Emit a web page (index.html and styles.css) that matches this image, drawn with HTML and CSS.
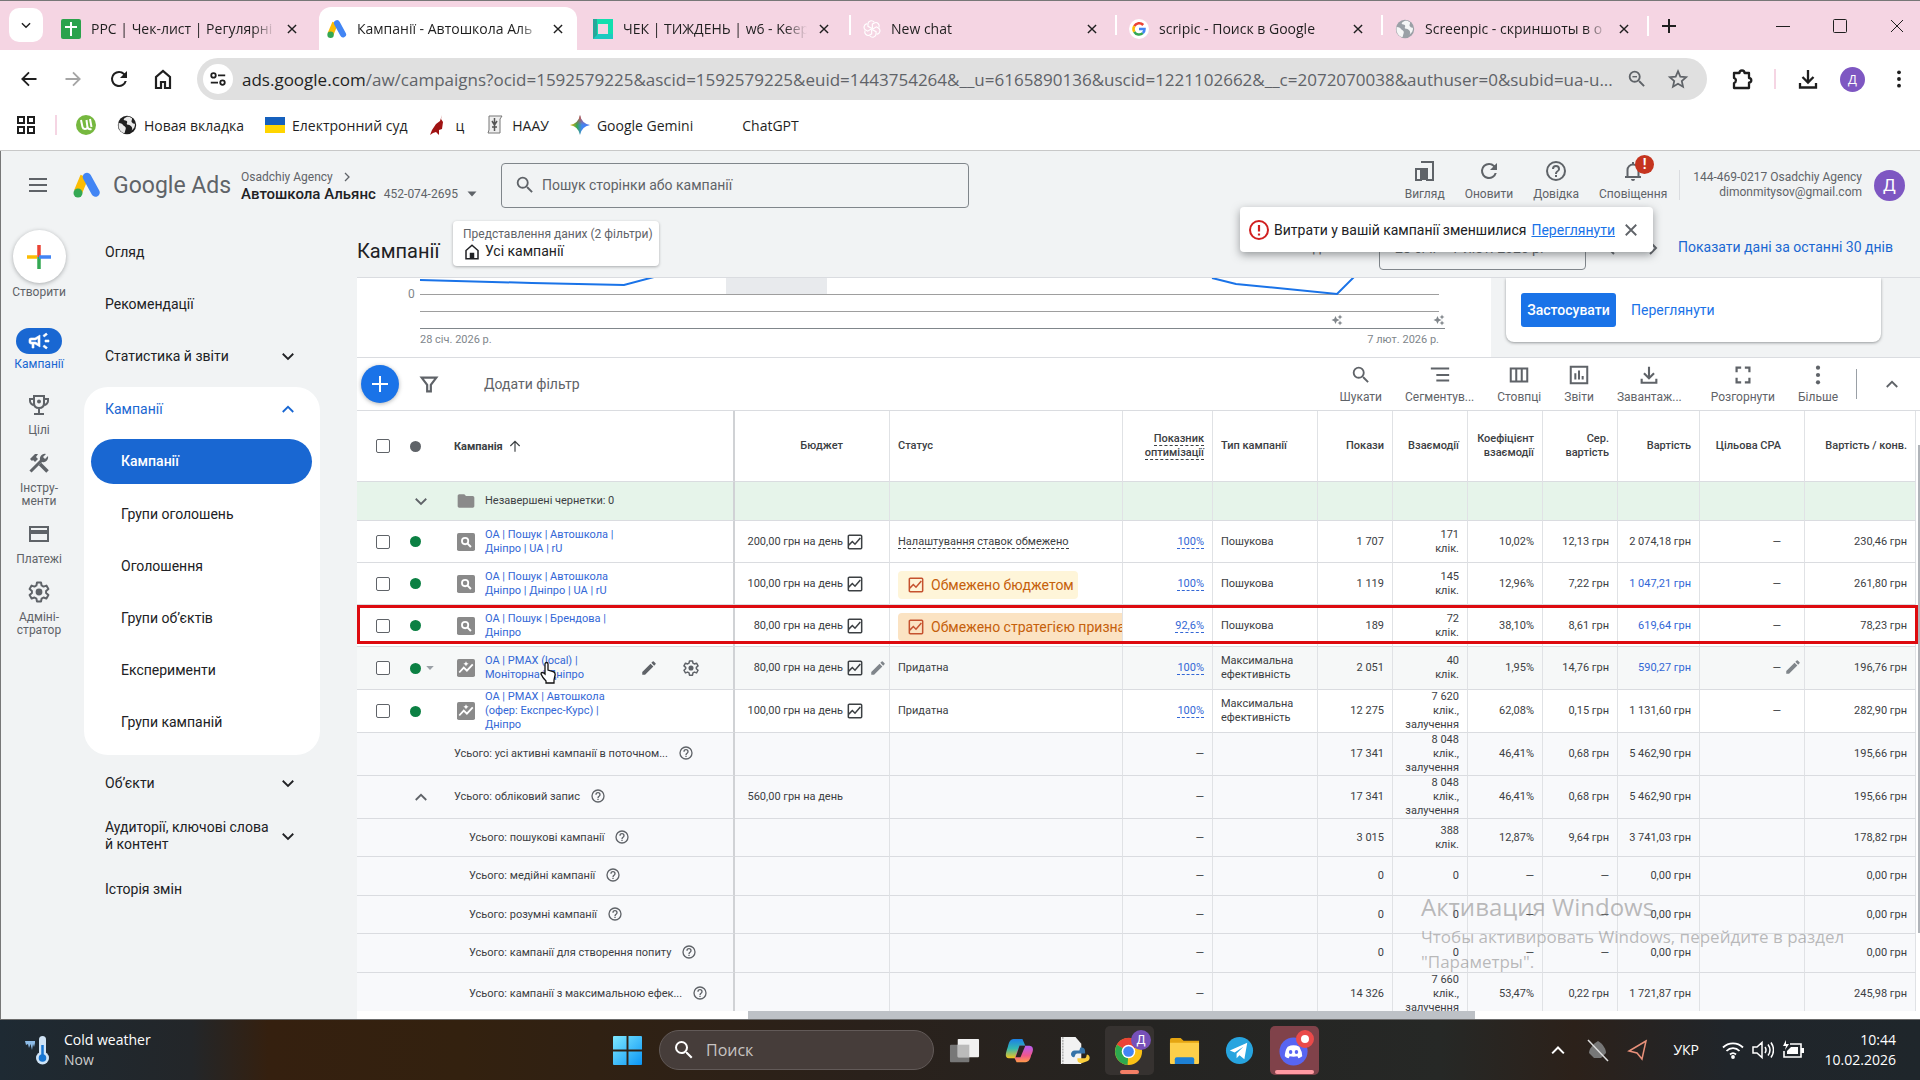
FILE: index.html
```html
<!DOCTYPE html>
<html lang="uk">
<head>
<meta charset="utf-8">
<title>Кампанії - Автошкола Альянс - Google Ads</title>
<link rel="stylesheet" href="styles.css">
</head>
<body>
<svg class="sprite" aria-hidden="true">
  <symbol id="x" viewBox="0 0 24 24"><path d="M5 5l14 14M19 5L5 19" fill="none" stroke="currentColor" stroke-width="2.4"/></symbol>
  <symbol id="down" viewBox="0 0 24 24"><path d="M5 9l7 7 7-7" fill="none" stroke="currentColor" stroke-width="2.4"/></symbol>
  <symbol id="up" viewBox="0 0 24 24"><path d="M5 16l7-7 7 7" fill="none" stroke="currentColor" stroke-width="2.4"/></symbol>
  <symbol id="right" viewBox="0 0 24 24"><path d="M8 4l8 8-8 8" fill="none" stroke="currentColor" stroke-width="2.6"/></symbol>
  <symbol id="left" viewBox="0 0 24 24"><path d="M16 4l-8 8 8 8" fill="none" stroke="currentColor" stroke-width="2.6"/></symbol>
  <symbol id="caret" viewBox="0 0 24 24"><path d="M3 7h18l-9 10z" fill="currentColor"/></symbol>
  <symbol id="back" viewBox="0 0 24 24"><path d="M21 12H4M12 4l-8 8 8 8" fill="none" stroke="currentColor" stroke-width="2.2"/></symbol>
  <symbol id="fwd" viewBox="0 0 24 24"><path d="M3 12h17M12 4l8 8-8 8" fill="none" stroke="currentColor" stroke-width="2.2"/></symbol>
  <symbol id="arrowup" viewBox="0 0 24 24"><path d="M12 22V4M4 12l8-8 8 8" fill="none" stroke="currentColor" stroke-width="2"/></symbol>
  <symbol id="reload" viewBox="0 0 24 24"><path d="M17.65 6.35A7.958 7.958 0 0 0 12 4a8 8 0 1 0 7.73 10h-2.08A6 6 0 1 1 12 6c1.66 0 3.14.69 4.22 1.78L13 11h7V4l-2.35 2.35z" fill="currentColor"/></symbol>
  <symbol id="home" viewBox="0 0 24 24"><path d="M5 21V10l7-6 7 6v11h-5v-6h-4v6z" fill="none" stroke="currentColor" stroke-width="2.2"/></symbol>
  <symbol id="search" viewBox="0 0 24 24"><path d="M15.5 14h-.79l-.28-.27A6.47 6.47 0 0 0 16 9.5 6.5 6.5 0 1 0 9.5 16c1.61 0 3.09-.59 4.23-1.57l.27.28v.79l5 4.99L20.49 19zm-6 0a4.5 4.5 0 1 1 0-9 4.5 4.5 0 0 1 0 9z" fill="currentColor"/></symbol>
  <symbol id="star" viewBox="0 0 24 24"><path d="M12 3.5l2.5 5.9 6.4.6-4.8 4.2 1.4 6.3-5.500-3.300-5.500 3.300 1.400-6.300L3.100 10l6.400-.6z" fill="none" stroke="currentColor" stroke-width="1.9"/></symbol>
  <symbol id="download" viewBox="0 0 24 24"><path d="M12 3v12M6.500 10l5.500 5.500 5.500-5.500M4 16v4.500h16V16" fill="none" stroke="currentColor" stroke-width="2.3"/></symbol>
  <symbol id="dots" viewBox="0 0 24 24"><g fill="currentColor"><circle cx="12" cy="4" r="2.3"/><circle cx="12" cy="12" r="2.3"/><circle cx="12" cy="20" r="2.3"/></g></symbol>
  <symbol id="globe" viewBox="0 0 24 24"><circle cx="12" cy="12" r="11" fill="currentColor"/><path d="M2 9.500c3 .5 5 1 6 3.500 1.500 1 3 1.500 2.500 3.500L9 22C4 20.500 1 16 2 9.500zM12 2c-2 1-4 2-4 4 1 1 3 0 4 1.500 1 2-1 2.500 0 4 2 0 4 1 5.500 2.500 1 1.500 1 3 0 4.500 3-2 4.500-5 4-8-2 .5-3-1-4-2-.5-2 1-3 .5-4.500C16.500 2.500 14.500 2 12 2z" fill="#fff" fill-opacity=".9"/></symbol>
  <symbol id="help" viewBox="0 0 24 24"><path d="M11 18h2v-2h-2v2zm1-16a10 10 0 1 0 0 20 10 10 0 0 0 0-20zm0 18a8 8 0 1 1 0-16 8 8 0 0 1 0 16zm0-14a4 4 0 0 0-4 4h2a2 2 0 1 1 4 0c0 2-3 1.750-3 5h2c0-2.250 3-2.500 3-5a4 4 0 0 0-4-4z" fill="currentColor"/></symbol>
  <symbol id="edit" viewBox="0 0 24 24"><path d="M3 17.250V21h3.750L17.810 9.940l-3.750-3.750zM20.710 7.040a1 1 0 0 0 0-1.410l-2.340-2.340a1 1 0 0 0-1.410 0l-1.830 1.830 3.750 3.750z" fill="currentColor"/></symbol>
  <symbol id="gear" viewBox="0 0 24 24"><path d="M10 2.500h4l.6 3 1.900 1.100 2.900-1 2 3.500-2.300 2v1.900l2.300 2-2 3.500-2.900-1-1.900 1.100-.6 3h-4l-.6-3-1.900-1.100-2.900 1-2-3.500 2.300-2v-1.900l-2.300-2 2-3.500 2.900 1L9.400 5.500z" fill="none" stroke="currentColor" stroke-width="2" stroke-linejoin="round"/><circle cx="12" cy="12" r="3.400" fill="currentColor"/></symbol>
  <symbol id="folder" viewBox="0 0 24 24"><path d="M10 4H4c-1.100 0-2 .9-2 2v12c0 1.100.9 2 2 2h16c1.100 0 2-.9 2-2V8c0-1.100-.9-2-2-2h-8z" fill="currentColor"/></symbol>
  <symbol id="tsearch" viewBox="0 0 20 20"><rect width="20" height="20" rx="2" fill="#8a8a8a"/><circle cx="9" cy="9" r="3.500" fill="none" stroke="#fff" stroke-width="2"/><path d="M11.500 11.500l4 4" stroke="#fff" stroke-width="2.200"/></symbol>
  <symbol id="tpmax" viewBox="0 0 20 20"><rect width="20" height="20" rx="2" fill="#8a8a8a"/><path d="M2.500 15l5-5.500 3.500 3.500L17.500 6" fill="none" stroke="#fff" stroke-width="2"/><path d="M10 2.500l.9 2 2 .9-2 .9-.9 2-.9-2-2-.9 2-.9z" fill="#fff"/></symbol>
  <symbol id="graph" viewBox="0 0 18 18"><rect x="1.500" y="1.500" width="15" height="15" rx="1" fill="none" stroke="currentColor" stroke-width="1.700"/><path d="M2 12.500l4-4 3 3 6-7" fill="none" stroke="currentColor" stroke-width="1.700"/></symbol>
  <symbol id="spark" viewBox="0 0 24 24"><path d="M9 4l2.500 5.500L17 12l-5.500 2.500L9 20l-2.500-5.500L1 12l5.500-2.500zM18 1l1.500 3.500L23 6l-3.500 1.500L18 11l-1.500-3.500L13 6l3.500-1.500zM18 13l1.500 3.500L23 18l-3.500 1.500L18 23l-1.500-3.500L13 18l3.500-1.500z" fill="currentColor"/></symbol>
  <symbol id="ads" viewBox="0 0 28 26"><path d="M11.500 4.500L5 20" stroke="#fbbc04" stroke-width="8.500"/><path d="M14 5l8.500 15.500" stroke="#4285f4" stroke-width="8.500" stroke-linecap="round"/><circle cx="5" cy="21" r="4.500" fill="#34a853"/></symbol>
</svg>

<header class="browser">
  <div class="tabstrip">
    <button class="tabsearch" aria-label="Пошук вкладок"><svg class="s14"><use href="#down"/></svg></button>
    <div class="tab"><svg class="s20" viewBox="0 0 20 20"><rect width="20" height="20" rx="2" fill="#2ba24c"/><path d="M9 3h2v4h5v2h-5v8H9V9H4V7h5z" fill="#fff"/></svg><span class="tabtext">PPC | Чек-лист | Регулярні</span><button aria-label="Закрити"><svg class="s14"><use href="#x"/></svg></button></div>
    <div class="tab active"><svg class="s20"><use href="#ads"/></svg><span class="tabtext">Кампанії - Автошкола Аль</span><button aria-label="Закрити"><svg class="s14"><use href="#x"/></svg></button></div>
    <div class="tab"><svg class="s20" viewBox="0 0 20 20"><path d="M0 0h20v20H0z" fill="#12dfae"/><path d="M0 0h4v20H0z" fill="#26a89a"/><path d="M5 15h15v5H0z" fill="#1ec9c0"/><path d="M5 5h10v10H5z" fill="#f5d5e3"/></svg><span class="tabtext">ЧЕК | ТИЖДЕНЬ | w6 - Keep</span><button aria-label="Закрити"><svg class="s14"><use href="#x"/></svg></button></div>
    <div class="tab sep"><svg class="s18" viewBox="0 0 20 20" fill="none" stroke="#fff" stroke-width="1.300"><path id="petal" d="M10 9.500L5.500 7V4.500C5.500 1 10-.5 12.500 2.500"/><use href="#petal" transform="rotate(60 10 10)"/><use href="#petal" transform="rotate(120 10 10)"/><use href="#petal" transform="rotate(180 10 10)"/><use href="#petal" transform="rotate(240 10 10)"/><use href="#petal" transform="rotate(300 10 10)"/></svg><span class="tabtext">New chat</span><button aria-label="Закрити"><svg class="s14"><use href="#x"/></svg></button></div>
    <div class="tab sep"><svg class="s20" viewBox="0 0 20 20" fill="none" stroke-width="2.600"><circle cx="10" cy="10" r="10" fill="#fff"/><path d="M14.200 6A5.500 5.500 0 0 0 5.300 7.200" stroke="#ea4335"/><path d="M5.300 7.200a5.500 5.500 0 0 0 0 5.600" stroke="#fbbc04"/><path d="M5.300 12.800a5.500 5.500 0 0 0 8.500 1.300" stroke="#34a853"/><path d="M13.800 14.100a5.500 5.500 0 0 0 1.700-4.100H10" stroke="#4285f4"/></svg><span class="tabtext">scripic - Поиск в Google</span><button aria-label="Закрити"><svg class="s14"><use href="#x"/></svg></button></div>
    <div class="tab sep"><svg class="s20 gray"><use href="#globe"/></svg><span class="tabtext">Screenpic - скриншоты в о</span><button aria-label="Закрити"><svg class="s14"><use href="#x"/></svg></button></div>
    <button class="newtab sep" aria-label="Нова вкладка"><svg class="s14" viewBox="0 0 14 14"><path d="M7 0v14M0 7h14" stroke="currentColor" stroke-width="2"/></svg></button>
    <div class="winctl">
      <button aria-label="Згорнути"><svg class="s14" viewBox="0 0 14 14"><path d="M0 7.500h14" stroke="currentColor"/></svg></button>
      <button aria-label="Розгорнути"><svg class="s14" viewBox="0 0 14 14"><rect x=".5" y=".5" width="13" height="13" rx="1" fill="none" stroke="currentColor"/></svg></button>
      <button aria-label="Закрити вікно"><svg class="s14" viewBox="0 0 14 14"><path d="M1 1l12 12M13 1L1 13" stroke="currentColor"/></svg></button>
    </div>
  </div>
  <div class="toolbar">
    <button aria-label="Назад"><svg class="s20"><use href="#back"/></svg></button>
    <button class="dim" aria-label="Вперед"><svg class="s20"><use href="#fwd"/></svg></button>
    <button aria-label="Оновити"><svg class="s24"><use href="#reload"/></svg></button>
    <button aria-label="Додому"><svg class="s24"><use href="#home"/></svg></button>
    <div class="omnibox">
      <button class="siteinfo" aria-label="Про сайт"><svg class="s18" viewBox="0 0 20 20" fill="none" stroke="currentColor" stroke-width="2"><circle cx="5" cy="6" r="2.500"/><path d="M10 6h8M2 14h8"/><circle cx="15" cy="14" r="2.500"/></svg></button>
      <label class="url" for="url">ads.google.com</label><input class="url" id="url" value="/aw/campaigns?ocid=1592579225&amp;ascid=1592579225&amp;euid=1443754264&amp;__u=6165890136&amp;uscid=1221102662&amp;__c=2072070038&amp;authuser=0&amp;subid=ua-u...">
      <svg class="s22" viewBox="0 0 24 24"><use href="#search"/><path d="M7 9.500h5" stroke="currentColor" stroke-width="1.500"/></svg>
      <svg class="s22"><use href="#star"/></svg>
    </div>
    <div class="tools">
      <button aria-label="Розширення"><svg class="s24" viewBox="0 0 24 24"><path d="M4 6h5.500a2.500 2.500 0 0 1 5 0H19v5a2.300 2.300 0 0 1 0 4.600V21H4v-5a2.600 2.600 0 0 0 0-5z" fill="none" stroke="currentColor" stroke-width="2.300" stroke-linejoin="round"/></svg></button>
      <i class="pinksep"></i>
      <button aria-label="Завантаження"><svg class="s24"><use href="#download"/></svg></button>
      <span class="ava small">Д</span>
      <button aria-label="Меню"><svg class="s20"><use href="#dots"/></svg></button>
    </div>
  </div>
  <nav class="bookmarks">
    <svg class="s20" viewBox="0 0 20 20" fill="none" stroke="currentColor" stroke-width="2"><path d="M2 2h6v6H2zM12 2h6v6h-6zM2 12h6v6H2zM12 12h6v6h-6z"/></svg>
    <i class="pinksep"></i>
    <a href="#" aria-label="uTorrent"><svg class="s20" viewBox="0 0 20 20"><circle cx="10" cy="10" r="10" fill="#76b83f"/><path d="M5 5l1.500 7c.5 2.500 4 2.500 5 .5L10.500 5M11.500 12c.5 2 2 2.500 4 2M14 4l1.500 8" fill="none" stroke="#fff" stroke-width="2"/></svg></a>
    <a href="#"><svg class="s20"><use href="#globe"/></svg>Новая вкладка</a>
    <a href="#"><svg class="s20" viewBox="0 0 20 20"><path d="M0 2h20v8H0z" fill="#1560bd"/><path d="M0 10h20v8H0z" fill="#ffd500"/></svg>Електронний суд</a>
    <a href="#"><svg class="s20" viewBox="0 0 20 20"><path d="M14 0l-1 4 2 3-1 7-3 1v5l-3-3-3 1-3 2 2-5 4-6 4-3 1-3z" fill="#a01313"/></svg>ц</a>
    <a href="#"><svg class="s20" viewBox="0 0 20 20"><path d="M4 1h13l-2 3v14H3l1-3z" fill="#eee" stroke="#777"/><path d="M9.500 3v13M7 6l2.500 4L12 6M7 12h5" stroke="#555" stroke-width="1.500" fill="none"/></svg>НААУ</a>
    <a href="#"><svg class="s20" viewBox="0 0 20 20"><defs><linearGradient id="gm"><stop offset="0" stop-color="#f6b60b"/><stop offset=".35" stop-color="#35a853"/><stop offset=".6" stop-color="#4285f4"/><stop offset="1" stop-color="#4a78f0"/></linearGradient><linearGradient id="gm2" x2="0" y2="1"><stop offset="0" stop-color="#ea4335"/><stop offset=".5" stop-color="#ea4335" stop-opacity="0"/></linearGradient></defs><path d="M10 0q1.500 8.500 10 10-8.500 1.500-10 10Q8.500 11.500 0 10 8.500 8.500 10 0z" fill="url(#gm)"/><path d="M10 0q1.500 8.500 10 10-8.500 1.500-10 10Q8.500 11.500 0 10 8.500 8.500 10 0z" fill="url(#gm2)"/></svg>Google Gemini</a>
    <a href="#" class="gpt">ChatGPT</a>
  </nav>
</header>

<div class="app">
  <header class="apphead">
    <button aria-label="Меню"><svg class="s24" viewBox="0 0 24 24"><path d="M3 6h18M3 12h18M3 18h18" stroke="currentColor" stroke-width="2"/></svg></button>
    <svg class="logo"><use href="#ads"/></svg>
    <span class="brand">Google Ads</span>
    <div class="account">
      <div class="acc1">Osadchiy Agency <svg class="s12"><use href="#right"/></svg></div>
      <div class="acc2"><b>Автошкола Альянс</b><span>452-074-2695</span><svg class="s12"><use href="#caret"/></svg></div>
    </div>
    <div class="appsearch"><svg class="s22"><use href="#search"/></svg><input type="text" aria-label="Пошук" placeholder="Пошук сторінки або кампанії"></div>
    <div class="headtools">
      <button><svg class="s24" viewBox="0 0 24 24"><path d="M3 10h5v11H3zM8 3h12v18h-7" fill="none" stroke="currentColor" stroke-width="2"/><path d="M8 9h7v12H8z" fill="currentColor"/></svg>Вигляд</button>
      <button><svg class="s24"><use href="#reload"/></svg>Оновити</button>
      <button><svg class="s24"><use href="#help"/></svg>Довідка</button>
      <button><svg class="s24" viewBox="0 0 24 24"><path d="M4 18h16M6.500 18v-7a5.500 5.500 0 0 1 11 0v7M12 3v3" fill="none" stroke="currentColor" stroke-width="2"/><path d="M10 20h4a2 2 0 0 1-4 0z" fill="currentColor"/></svg>Сповіщення<i class="badge">!</i></button>
    </div>
    <div class="user"><div>144-469-0217 Osadchiy Agency</div><div>dimonmitysov@gmail.com</div></div>
    <span class="ava">Д</span>
  </header>

  <div class="appbody">
    <nav class="rail">
      <a href="#" class="create"><span><svg viewBox="0 0 24 24"><path d="M12 0v12" stroke="#ea4335" stroke-width="3.500"/><path d="M12 12v12" stroke="#34a853" stroke-width="3.500"/><path d="M0 12h10" stroke="#fbbc04" stroke-width="3.500"/><path d="M12 12h12" stroke="#4285f4" stroke-width="3.500"/></svg></span>Створити</a>
      <a href="#" class="on"><span><svg class="s24" viewBox="0 0 24 24"><path d="M18 11v2h4v-2zm-2 6.600l3.200 2.400 1.200-1.600-3.200-2.400zM20.400 5.600L19.200 4 16 6.400 17.200 8zM4 9a2 2 0 0 0-2 2v2c0 1.100.9 2 2 2h1v4h2v-4h1l5 3V6L8 9zm7 .6v4.800L8.500 13H4v-2h4.500z" fill="currentColor" stroke="currentColor" stroke-width=".6"/></svg></span>Кампанії</a>
      <a href="#"><svg class="s24" viewBox="0 0 24 24"><path d="M7 3h10v7c0 3-2 5-5 5s-5-2-5-5zM7 6H3v2c0 2 2 4 4 4M17 6h4v2c0 2-2 4-4 4M12 15v5M7 21h10" fill="none" stroke="currentColor" stroke-width="2"/><circle cx="12" cy="8.500" r="2" fill="currentColor"/></svg>Цілі</a>
      <a href="#"><svg class="s24" viewBox="0 0 24 24"><path d="M13 13l7.500 7.500" stroke="currentColor" stroke-width="3.600"/><path d="M3.500 20.500L16 8" stroke="currentColor" stroke-width="3"/><path d="M21 5l-3 3-2-2 3-3a5 5 0 0 0-6 6l2 2a5 5 0 0 0 6-6zM3 8l5-5h3L9 6l2 2-3 3-2-2-1 1z" fill="currentColor"/></svg>Інстру-<br>менти</a>
      <a href="#"><svg class="s24" viewBox="0 0 24 24"><path d="M3 5h18v14H3z" fill="none" stroke="currentColor" stroke-width="2"/><path d="M3 8h18v4H3z" fill="currentColor"/></svg>Платежі</a>
      <a href="#"><svg class="s24"><use href="#gear"/></svg>Адміні-<br>стратор</a>
    </nav>
    <nav class="side">
      <a href="#">Огляд</a>
      <a href="#">Рекомендації</a>
      <a href="#">Статистика й звіти<svg class="s18"><use href="#down"/></svg></a>
      <div class="group">
        <a href="#" class="gh">Кампанії<svg class="s18"><use href="#up"/></svg></a>
        <a href="#" class="sub cur">Кампанії</a>
        <a href="#" class="sub">Групи оголошень</a>
        <a href="#" class="sub">Оголошення</a>
        <a href="#" class="sub">Групи об’єктів</a>
        <a href="#" class="sub">Експерименти</a>
        <a href="#" class="sub">Групи кампаній</a>
      </div>
      <a href="#">Об’єкти<svg class="s18"><use href="#down"/></svg></a>
      <a href="#" class="two">Аудиторії, ключові слова<br>й контент<svg class="s18"><use href="#down"/></svg></a>
      <a href="#">Історія змін</a>
    </nav>

    <main class="main">
      <div class="titlebar">
        <h1>Кампанії</h1>
        <button class="view"><small>Представлення даних (2 фільтри)</small><span><svg class="s18" viewBox="0 0 24 24"><path d="M4 21V10l8-7 8 7v11z" fill="none" stroke="currentColor" stroke-width="2"/><path d="M9 13h6v8H9z" fill="currentColor"/></svg>Усі кампанії</span></button>
        <div class="range"><span>Інший діапазон</span><button class="dates">28 січ. – 7 лют. 2026 р.</button><svg class="s18"><use href="#left"/></svg><svg class="s18"><use href="#right"/></svg></div>
        <a href="#" class="last30">Показати дані за останні 30 днів</a>
      </div>
      <section class="overview">
        <div class="chart">
          <svg class="plot" viewBox="0 0 1134 50" preserveAspectRatio="none"><path d="M369 0h101v16H369z" fill="#e8eaed"/><path d="M63 16.500h1019M63 33.500h1019" stroke="#9e9e9e" fill="none"/><path d="M63 2l112 3 92 2 30-8M855 0l24 6 101 10 17-17" fill="none" stroke="#1a73e8" stroke-width="2"/></svg>
          <div class="axis"><svg class="s12"><use href="#spark"/></svg><svg class="s12"><use href="#spark"/></svg></div>
          <div class="labels"><span>28 січ. 2026 р.</span><span>7 лют. 2026 р.</span></div>
          <span class="zero">0</span>
        </div>
        <div class="rec"><div class="reccard"><button>Застосувати</button><a href="#">Переглянути</a></div></div>
      </section>
      <div class="tablebar">
        <button class="fab" aria-label="Додати"><svg class="s18" viewBox="0 0 18 18"><path d="M9 1v16M1 9h16" stroke="#fff" stroke-width="2"/></svg></button>
        <svg class="s22 filt" viewBox="0 0 24 24"><path d="M4 5h16l-6 8v7h-4v-7z" fill="none" stroke="currentColor" stroke-width="2.400"/></svg>
        <button class="addf">Додати фільтр</button>
        <div class="acts">
          <button><svg class="s22"><use href="#search"/></svg>Шукати</button>
          <button><svg class="s22" viewBox="0 0 24 24"><path d="M2 5h20M8 12h14M8 18h14" stroke="currentColor" stroke-width="2.200"/></svg>Сегментув...</button>
          <button><svg class="s22" viewBox="0 0 24 24"><path d="M3 5h18v14H3zM9 5v14M15 5v14" fill="none" stroke="currentColor" stroke-width="2.200"/></svg>Стовпці</button>
          <button><svg class="s22" viewBox="0 0 24 24"><path d="M3 3h18v18H3zM8 10v7M12 7v10M16 13v4" fill="none" stroke="currentColor" stroke-width="2.200"/></svg>Звіти</button>
          <button><svg class="s22"><use href="#download"/></svg>Завантаж...</button>
          <button class="wide"><svg class="s22" viewBox="0 0 24 24"><path d="M5 9V4h5M14 4h5v5M19 15v5h-5M10 20H5v-5" fill="none" stroke="currentColor" stroke-width="2.400"/></svg>Розгорнути</button>
          <button><svg class="s22"><use href="#dots"/></svg>Більше</button>
        </div>
        <i class="vsep"></i>
        <button aria-label="Згорнути"><svg class="s18"><use href="#up"/></svg></button>
      </div>
      <div class="tablewrap">
        <table>
          <colgroup><col class="c-chk"><col class="c-dot"><col class="c-name"><col class="c-bud"><col><col class="c-opt"><col class="c-type"><col class="c-n"><col class="c-n"><col class="c-n"><col class="c-n"><col class="c-cost"><col class="c-cpa"><col class="c-conv"></colgroup>
          <thead><tr>
            <th><input type="checkbox" aria-label="Вибрати всі"></th><th><i class="dot grey"></i></th><th class="nm"><b>Кампанія</b> <svg class="s14"><use href="#arrowup"/></svg></th>
            <th class="bud">Бюджет</th><th class="l">Статус</th><th><u>Показник</u><br><u>оптимізації</u></th><th class="l">Тип кампанії</th><th>Покази</th><th>Взаємодії</th><th>Коефіцієнт взаємодії</th><th>Сер. вартість</th><th>Вартість</th><th class="cpa">Цільова CPA</th><th>Вартість / конв.</th>
          </tr></thead>
          <tbody>
          <tr class="draft"><td></td><td><svg class="s18 chev"><use href="#down"/></svg></td><td class="nm"><div class="cell"><svg class="s20 typ"><use href="#folder"/></svg><span>Незавершені чернетки: 0</span></div></td><td class="bud"></td><td></td><td></td><td></td><td></td><td></td><td></td><td></td><td></td><td></td><td></td></tr>
          <tr class="camp"><td><input type="checkbox" aria-label="Вибрати"></td><td><i class="dot"></i></td><td class="nm"><div class="cell"><svg class="s18 typ"><use href="#tsearch"/></svg><a href="#">ОА | Пошук | Автошкола | Дніпро | UA | rU</a></div></td><td class="bud"><div>200,00 грн на день<svg class="s16"><use href="#graph"/></svg></div></td><td class="l"><u>Налаштування ставок обмежено</u></td><td><a href="#" class="pct">100%</a></td><td class="l">Пошукова</td><td>1 707</td><td>171<br>клік.</td><td>10,02%</td><td>12,13 грн</td><td>2 074,18 грн</td><td class="cpa">—</td><td>230,46 грн</td></tr>
          <tr class="camp"><td><input type="checkbox" aria-label="Вибрати"></td><td><i class="dot"></i></td><td class="nm"><div class="cell"><svg class="s18 typ"><use href="#tsearch"/></svg><a href="#">ОА | Пошук | Автошкола Дніпро | Дніпро | UA | rU</a></div></td><td class="bud"><div>100,00 грн на день<svg class="s16"><use href="#graph"/></svg></div></td><td class="l st"><span class="chip"><svg class="s16"><use href="#graph"/></svg>Обмежено бюджетом</span></td><td><a href="#" class="pct">100%</a></td><td class="l">Пошукова</td><td>1 119</td><td>145<br>клік.</td><td>12,96%</td><td>7,22 грн</td><td><a href="#">1 047,21 грн</a></td><td class="cpa">—</td><td>261,80 грн</td></tr>
          <tr class="camp marked"><td><input type="checkbox" aria-label="Вибрати"></td><td><i class="dot"></i></td><td class="nm"><div class="cell"><svg class="s18 typ"><use href="#tsearch"/></svg><a href="#">ОА | Пошук | Брендова | Дніпро</a></div></td><td class="bud"><div>80,00 грн на день<svg class="s16"><use href="#graph"/></svg></div></td><td class="l st"><span class="chip strong"><svg class="s16"><use href="#graph"/></svg>Обмежено стратегією призначення</span></td><td><a href="#" class="pct">92,6%</a></td><td class="l">Пошукова</td><td>189</td><td>72<br>клік.</td><td>38,10%</td><td>8,61 грн</td><td><a href="#">619,64 грн</a></td><td class="cpa">—</td><td>78,23 грн</td></tr>
          <tr class="pmax hover"><td><input type="checkbox" aria-label="Вибрати"></td><td><div class="cell"><i class="dot"></i><svg class="s10"><use href="#caret"/></svg></div></td><td class="nm"><div class="cell"><svg class="s18 typ"><use href="#tpmax"/></svg><a href="#">ОА | PMAX (local) | Моніторна | Дніпро</a><svg class="s18 ed"><use href="#edit"/></svg><svg class="s18 gr"><use href="#gear"/></svg></div>
            <svg class="cursor" viewBox="0 0 16 24"><path d="M5 13V3c0-2 3-2 3 0v6l5 1.500c2 .5 2.500 1.500 2 4L14 19v3H6v-2c-2-2-4-4.500-5-7 0-2 2-2 4 0z" fill="#fff" stroke="#111" stroke-width="1.300"/></svg></td><td class="bud"><div>80,00 грн на день<svg class="s16"><use href="#graph"/></svg><svg class="s18 be"><use href="#edit"/></svg></div></td><td class="l">Придатна</td><td><a href="#" class="pct">100%</a></td><td class="l">Максимальна ефективність</td><td>2 051</td><td>40<br>клік.</td><td>1,95%</td><td>14,76 грн</td><td><a href="#">590,27 грн</a></td><td class="cpa"><div>—<svg class="s18"><use href="#edit"/></svg></div></td><td>196,76 грн</td></tr>
          <tr class="pmax"><td><input type="checkbox" aria-label="Вибрати"></td><td><i class="dot"></i></td><td class="nm"><div class="cell"><svg class="s18 typ"><use href="#tpmax"/></svg><a href="#">ОА | PMAX | Автошкола (офер: Експрес-Курс) | Дніпро</a></div></td><td class="bud"><div>100,00 грн на день<svg class="s16"><use href="#graph"/></svg></div></td><td class="l">Придатна</td><td><a href="#" class="pct">100%</a></td><td class="l">Максимальна ефективність</td><td>12 275</td><td>7 620<br>клік.,<br>залучення</td><td>62,08%</td><td>0,15 грн</td><td>1 131,60 грн</td><td class="cpa">—</td><td>282,90 грн</td></tr>
          </tbody>
          <tbody class="tot">
          <tr class="pmax"><td></td><td></td><td class="nm"><div class="cell">Усього: усі активні кампанії в поточном...<svg class="s16 q"><use href="#help"/></svg></div></td><td class="bud"></td><td></td><td>—</td><td></td><td>17 341</td><td>8 048<br>клік.,<br>залучення</td><td>46,41%</td><td>0,68 грн</td><td>5 462,90 грн</td><td></td><td>195,66 грн</td></tr>
          <tr class="pmax"><td></td><td><svg class="s18 chev"><use href="#up"/></svg></td><td class="nm"><div class="cell">Усього: обліковий запис<svg class="s16 q"><use href="#help"/></svg></div></td><td class="bud">560,00 грн на день</td><td></td><td>—</td><td></td><td>17 341</td><td>8 048<br>клік.,<br>залучення</td><td>46,41%</td><td>0,68 грн</td><td>5 462,90 грн</td><td></td><td>195,66 грн</td></tr>
          <tr><td></td><td></td><td class="nm in"><div class="cell">Усього: пошукові кампанії<svg class="s16 q"><use href="#help"/></svg></div></td><td class="bud"></td><td></td><td>—</td><td></td><td>3 015</td><td>388<br>клік.</td><td>12,87%</td><td>9,64 грн</td><td>3 741,03 грн</td><td></td><td>178,82 грн</td></tr>
          <tr class="draft"><td></td><td></td><td class="nm in"><div class="cell">Усього: медійні кампанії<svg class="s16 q"><use href="#help"/></svg></div></td><td class="bud"></td><td></td><td>—</td><td></td><td>0</td><td>0</td><td>—</td><td>—</td><td>0,00 грн</td><td></td><td>0,00 грн</td></tr>
          <tr><td></td><td></td><td class="nm in"><div class="cell">Усього: розумні кампанії<svg class="s16 q"><use href="#help"/></svg></div></td><td class="bud"></td><td></td><td>—</td><td></td><td>0</td><td>0</td><td>—</td><td>—</td><td>0,00 грн</td><td></td><td>0,00 грн</td></tr>
          <tr class="draft"><td></td><td></td><td class="nm in"><div class="cell">Усього: кампанії для створення попиту<svg class="s16 q"><use href="#help"/></svg></div></td><td class="bud"></td><td></td><td>—</td><td></td><td>0</td><td>0</td><td>—</td><td>—</td><td>0,00 грн</td><td></td><td>0,00 грн</td></tr>
          <tr class="pmax"><td></td><td></td><td class="nm in"><div class="cell">Усього: кампанії з максимальною ефек...<svg class="s16 q"><use href="#help"/></svg></div></td><td class="bud"></td><td></td><td>—</td><td></td><td>14 326</td><td>7 660<br>клік.,<br>залучення</td><td>53,47%</td><td>0,22 грн</td><td>1 721,87 грн</td><td></td><td>245,98 грн</td></tr>
          </tbody>
        </table>
      </div>
      <div class="hscroll"><i></i></div>
    </main>
  </div>
  <i class="vthumb"></i>
  <div class="toast"><svg class="s22 red" viewBox="0 0 22 22"><circle cx="11" cy="11" r="9" fill="none" stroke="currentColor" stroke-width="2"/><path d="M11 6v6.500M11 14.500v2" stroke="currentColor" stroke-width="2.200"/></svg><span>Витрати у вашій кампанії зменшилися</span><a href="#">Переглянути</a><button aria-label="Закрити"><svg class="s18"><use href="#x"/></svg></button></div>
  <div class="watermark"><p class="w1">Активация Windows</p><p>Чтобы активировать Windows, перейдите в раздел "Параметры".</p></div>
</div>

<footer class="taskbar">
  <div class="weather"><svg viewBox="0 0 26 30"><path d="M0 6h10v2l-1 4-1-3-1 6-1.500-6L4 13 3 9 1 10z" fill="#8dbbe6"/><rect x="14" y="1" width="7" height="20" rx="3.500" fill="#cfe3f5"/><circle cx="17.500" cy="23" r="6.500" fill="#cfe3f5"/><circle cx="17.500" cy="23" r="3.800" fill="#1675d1"/><path d="M17.500 10v12" stroke="#1675d1" stroke-width="2.500"/></svg><div><div>Cold weather</div><div class="now">Now</div></div></div>
  <div class="center">
    <button class="start" aria-label="Пуск"><svg viewBox="0 0 30 30"><defs><linearGradient id="wn" x2="1" y2="1"><stop offset="0" stop-color="#7fe9ff"/><stop offset="1" stop-color="#0a95f5"/></linearGradient></defs><path d="M0 1q0-1 1-1h13v14H0zM16 0h13q1 0 1 1v13H16zM0 16h14v14H1q-1 0-1-1zM16 16h14v13q0 1-1 1H16z" fill="url(#wn)"/></svg></button>
    <div class="tsearch"><svg class="s24"><use href="#search"/></svg><input type="text" aria-label="Поиск" placeholder="Поиск"></div>
    <div class="pins">
      <button aria-label="Представление задач"><svg viewBox="0 0 32 32"><rect x="1" y="10" width="20" height="18" rx="1" fill="#777"/><rect x="9" y="4" width="22" height="19" rx="1" fill="#f1f1f1"/><path d="M9 10h12v13H9z" fill="#bbb"/></svg></button>
      <button aria-label="Copilot"><svg viewBox="0 0 32 32"><defs><linearGradient id="cp" x2="0" y2="1"><stop offset="0" stop-color="#1b7fe8"/><stop offset=".5" stop-color="#34b8b0"/><stop offset="1" stop-color="#f5c51c"/></linearGradient><linearGradient id="cq" x2="0" y2="1"><stop offset="0" stop-color="#b65df5"/><stop offset=".6" stop-color="#f0578c"/><stop offset="1" stop-color="#ff9a4a"/></linearGradient></defs><path d="M10 4h9l3 7h-6l-4 13H5c-5 0-3-6-1-12 1-4 2-8 6-8z" fill="url(#cp)"/><path d="M22 28h-9l-2-4 5-13h9c7 0 5 6 3 10-1 4-2 7-6 7z" fill="url(#cq)"/><path d="M16 11h6l-5 12h-5z" fill="#2a2420"/></svg></button>
      <button aria-label="Python"><svg viewBox="0 0 32 32"><path d="M2 2h15l6 7v21H2z" fill="#f2f2f2"/><path d="M4 2v28" stroke="#888" stroke-dasharray="2 1"/><path d="M22 13c5 0 5 2 5 6h-8c-3 0-2 4-4 4-4-1-3-7 1-7h5z" fill="#3573a8"/><path d="M24 29c-5 0-5-2-5-5h7c3 0 2-4 3-4 4 1 3 7 0 7z" fill="#f9ce3d"/></svg></button>
      <button class="tile" aria-label="Chrome"><svg viewBox="0 0 32 32"><circle cx="15" cy="17" r="14" fill="#fbc116"/><path d="M15 17L3 10a14 14 0 0 1 24.500 0z" fill="#ea4335"/><path d="M15 17L3 10a14 14 0 0 0 11 21z" fill="#2da94f"/><circle cx="15" cy="17" r="7" fill="#fff"/><circle cx="15" cy="17" r="5.500" fill="#4285f4"/></svg><i class="cava">Д</i></button>
      <button aria-label="Проводник"><svg viewBox="0 0 32 32"><path d="M1 5q0-2 2-2h9l3 3h16v22H1z" fill="#e5a511"/><path d="M1 8h30v21q0 1-1 1H2q-1 0-1-1z" fill="#fdcf4a"/><path d="M6 30v-5q0-2 2-2h16q2 0 2 2v5z" fill="#1d80d4"/></svg></button>
      <button aria-label="Telegram"><svg viewBox="0 0 32 32"><circle cx="16" cy="16" r="14" fill="#27a4df"/><path d="M6 16l18-8-3 17-5-4-3 3v-5l7-7-9 6z" fill="#fff"/></svg></button>
      <button class="tile disc" aria-label="Discord"><svg viewBox="0 0 32 32"><circle cx="15" cy="17" r="14.500" fill="#5865f2"/><path d="M9 12q6-3 12 0 3 5 3 10-3 2-4 2l-1-2q-4 1-8 0l-1 2q-2 0-4-2 0-6 3-10z" fill="#fff"/><ellipse cx="12" cy="17.500" rx="1.800" ry="2" fill="#5865f2"/><ellipse cx="18" cy="17.500" rx="1.800" ry="2" fill="#5865f2"/></svg><i class="rec-dot"></i></button>
    </div>
  </div>
  <div class="tray">
    <svg class="s20"><use href="#up"/></svg>
    <svg class="s24 tg" viewBox="0 0 24 24"><path d="M12 3c5 3 8 8 8 12l-5 5H8l-5-5c0-4 4-9 9-12z" fill="#777"/><path d="M2 2l20 21" stroke="#ddd" stroke-width="1.500"/></svg>
    <svg class="s24" viewBox="0 0 24 24"><path d="M20 3L3 13l8 2 5 6z" fill="none" stroke="#e8907a" stroke-width="1.500"/></svg>
    <span class="lang">УКР</span>
    <svg class="s22" viewBox="0 0 22 22" fill="none" stroke="#fff" stroke-width="1.800"><path d="M1 8.500a14 14 0 0 1 20 0M4.500 12a9 9 0 0 1 13 0M8 15.500a4.500 4.500 0 0 1 6 0"/><circle cx="11" cy="18" r="1" fill="#fff"/></svg>
    <svg class="s22 tv" viewBox="0 0 22 22" fill="none" stroke="#fff" stroke-width="1.500"><path d="M1 8h4l5-4.500v15L5 14H1zM13 8q2 3 0 6M16 5.500q4 5.500 0 11M19 3.500q5 7.500 0 15"/></svg>
    <svg class="s22 tb" viewBox="0 0 22 22"><path d="M8 5h11v13H2v-6" fill="none" stroke="#fff" stroke-width="1.600"/><path d="M9 8h7v7H5v-3zM19 9h3v5h-3z" fill="#fff"/><path d="M4 1L1 7h3l-1 4 4-6H4z" fill="#fff"/></svg>
    <div class="clock"><div>10:44</div><div>10.02.2026</div></div>
  </div>
</footer>
</body>
</html>
```
FILE: styles.css
```css
* { box-sizing: border-box; }
body { margin: 0; height: 100vh; display: flex; flex-direction: column; overflow: hidden; font-family: Roboto, "Liberation Sans", sans-serif; font-size: 12px; color: #3c4043; background: #fff; }
button { border: 0; padding: 0; background: none; font: inherit; color: inherit; }
input { font: inherit; }
a { color: inherit; text-decoration: none; }
svg { display: block; flex: none; }
.sprite { position: absolute; width: 0; height: 0; }
.s10 { width: 10px; height: 10px; } .s12 { width: 12px; height: 12px; } .s14 { width: 14px; height: 14px; }
.s16 { width: 16px; height: 16px; } .s18 { width: 18px; height: 18px; } .s20 { width: 20px; height: 20px; }
.s22 { width: 22px; height: 22px; } .s24 { width: 24px; height: 24px; }

/* browser chrome */
.browser { flex: none; font-family: "Open Sans", "Noto Sans", sans-serif; color: #1f1f1f; border-bottom: 1px solid #c8c8c8; }
.tabstrip { display: flex; height: 50px; padding-left: 9px; background: #f5d5e3; border-top: 1px solid #777; }
.tabsearch { width: 34px; height: 34px; margin: 7px 10px 0 0; border-radius: 10px; background: #fff; display: grid; place-items: center; flex: none; }
.tab { flex: 0 1 266px; min-width: 0; height: 43px; margin-top: 6px; padding: 0 20px 0 8px; display: flex; align-items: center; gap: 10px; font-size: 14px; position: relative; }
.tab.sep { padding: 0 18px 0 12px; }
.tab.active::before { content: ""; position: absolute; inset: 0 8px 0 0; background: #fff; border-radius: 12px 12px 0 0; z-index: 0; }
.tab > * { position: relative; }
.tabtext { flex: 1; min-width: 0; overflow: hidden; white-space: nowrap; line-height: 24px; mask-image: linear-gradient(90deg, #000 88%, transparent); }
.sep::before { content: ""; position: absolute; left: -2px; top: 8px; width: 2px; height: 20px; background: #fff; }
.gray { color: #9aa0a6; }
.newtab { position: relative; width: 40px; height: 36px; margin-top: 7px; display: grid; place-items: center; }
.winctl { margin-left: auto; display: flex; align-items: center; gap: 43px; padding-right: 16px; }
.toolbar { display: flex; align-items: center; height: 58px; padding-left: 19px; }
.toolbar > button { margin-right: 24px; } .toolbar > button + button + button { margin-right: 20px; }
.dim { color: #a5a5a5; }
.omnibox { flex: 1; min-width: 0; height: 42px; margin-left: 2px; padding: 0 18px 0 6px; border-radius: 21px; background: #e0e0e0; display: flex; align-items: center; gap: 19px; color: #5f6368; }
.siteinfo { width: 30px; height: 30px; border-radius: 50%; background: #fff; display: grid; place-items: center; color: #1f1f1f; margin-right: -10px; }
.url { font-size: 17px; }
label.url { color: #1f1f1f; margin-right: -19px; }
input.url { flex: 1; min-width: 0; border: 0; padding: 0; margin-right: -10px; background: none; color: #5f6368; outline: 0; text-overflow: ellipsis; }
.tools { display: flex; align-items: center; gap: 20px; padding: 0 11px 0 23px; }
.pinksep { width: 2px; height: 20px; background: #f5d5e3; flex: none; }
.ava { width: 31px; height: 31px; border-radius: 50%; background: #7e57c2; color: #fff; display: grid; place-items: center; font-size: 17px; flex: none; }
.ava.small { width: 25px; height: 25px; font-size: 13px; margin-right: 4px; }
.bookmarks { display: flex; align-items: center; height: 34px; margin-bottom: 8px; padding-left: 16px; gap: 21px; font-size: 14px; }
.bookmarks a { display: flex; align-items: center; gap: 7px; white-space: nowrap; }
.bookmarks .pinksep { margin: 0 -2px; }
.bookmarks .gpt { margin-left: 28px; }

/* app frame */
.app { flex: 1; min-height: 0; position: relative; display: flex; flex-direction: column; background: #f1f3f4; border-left: 1px solid #777; border-bottom: 1px solid #6b6b6b; }
.apphead { display: flex; align-items: center; height: 68px; padding: 0 15px 0 25px; flex: none; color: #5f6368; }
.logo { width: 28px; height: 26px; margin: 0 12px 0 23px; }
.brand { font-size: 23px; width: 128px; }
.account { width: 260px; line-height: 16px; }
.acc1 { display: flex; align-items: center; gap: 8px; }
.acc2 { display: flex; align-items: center; gap: 8px; white-space: nowrap; margin-top: 1px; }
.acc2 b { font-weight: 500; font-size: 15px; color: #202124; }
.appsearch { width: 468px; height: 45px; border: 1px solid #80868b; border-radius: 4px; display: flex; align-items: center; gap: 4px; padding-left: 12px; }
.appsearch input { flex: 1; border: 0; background: none; outline: 0; font-size: 14px; }
.appsearch input::placeholder { color: #5f6368; opacity: 1; }
.headtools { margin-left: auto; display: flex; gap: 20px; }
.headtools button { position: relative; display: flex; flex-direction: column; align-items: center; line-height: 14px; gap: 4px; padding-bottom: 10px; }
.badge { position: absolute; left: 36px; top: -4px; width: 19px; height: 19px; border-radius: 50%; background: #c5341f; color: #fff; font: 700 14px/19px Roboto, sans-serif; text-align: center; }
.user { margin-left: 12px; padding-left: 13px; border-left: 1px solid #dadce0; text-align: right; line-height: 15px; margin-right: 12px; }
.appbody { flex: 1; min-height: 0; display: flex; }
.rail { width: 76px; flex: none; padding-top: 11px; display: flex; flex-direction: column; align-items: center; text-align: center; color: #5f6368; line-height: 13px; }
.rail a { display: flex; flex-direction: column; align-items: center; gap: 7px; margin-bottom: 14px; }
.rail .create { gap: 3px; margin-bottom: 29px; }
.rail .create span { width: 53px; height: 53px; border-radius: 50%; background: #fff; box-shadow: 0 1px 4px rgba(60,64,67,.4); display: grid; place-items: center; }
.rail .create svg { width: 24px; height: 24px; }
.rail .on { color: #1967d2; gap: 4px; margin-bottom: 22px; }
.rail .on span { width: 46px; height: 26px; border-radius: 13px; background: #1967d2; color: #fff; display: grid; place-items: center; }
.side { width: 236px; margin: 7px 37px 0 7px; flex: none; font-size: 14px; color: #202124; }
.side a { display: flex; align-items: center; justify-content: space-between; height: 52px; padding: 0 23px 0 21px; line-height: 17px; }
.side .group { background: #fff; border-radius: 24px; padding: 0 8px 8px 7px; margin: 5px 0 2px; height: 368px; }
.side .group .gh { height: 52px; padding: 0 15px 8px 14px; color: #1967d2; }
.side .group .sub { height: 45px; padding-left: 30px; margin-bottom: 8px; border-radius: 23px; }
.side .group .sub + .sub { margin-bottom: 7px; }
.side .group .cur { background: #1967d2; color: #fff; font-weight: 500; }
.side .two { height: 54px; }

/* main */
.main { flex: 1; min-width: 0; display: flex; flex-direction: column; }
.titlebar { height: 59px; flex: none; display: flex; align-items: flex-end; border-bottom: 1px solid #dadce0; padding: 0 27px 7px 0; line-height: 45px; }
h1 { margin: 0; width: 96px; font-size: 20px; line-height: 38px; font-weight: 400; color: #202124; }
.view { width: 206px; height: 45px; border-radius: 4px; background: #fff; box-shadow: 0 1px 3px rgba(60,64,67,.4); text-align: left; padding: 0 10px; line-height: 17px; margin-bottom: 4px; }
.view small { display: block; font-size: 12px; color: #5f6368; white-space: nowrap; }
.view span { display: flex; gap: 4px; font-size: 14px; color: #202124; }
.range { margin-left: auto; display: flex; align-items: center; gap: 8px; color: #5f6368; font-size: 14px; margin-right: 16px; }
.dates { width: 207px; height: 45px; border: 1px solid #80868b; border-radius: 4px; text-align: left; padding-left: 15px; margin-right: 8px; }
.range svg + svg { margin-left: 16px; }
.last30 { font-size: 14px; color: #1967d2; }
.overview { display: flex; height: 79px; flex: none; }
.chart { flex: 1; min-width: 0; background: #fff; position: relative; color: #80868b; }
.plot { width: 100%; height: 50px; }
.axis { display: flex; justify-content: flex-end; gap: 90px; height: 15px; margin: -14px 46px 0 63px; border-bottom: 1px solid #80868b; }
.labels { display: flex; justify-content: space-between; margin: 4px 52px 0 63px; font-size: 11px; }
.zero { position: absolute; left: 51px; top: 9px; }
.rec { width: 429px; padding: 0 39px 0 15px; flex: none; }
.reccard { height: 64px; background: #fff; border-radius: 0 0 8px 8px; box-shadow: 0 1px 3px rgba(60,64,67,.5); clip-path: inset(0 -6px -6px -6px); display: flex; align-items: center; gap: 15px; padding-left: 15px; font-size: 14px; color: #1a73e8; }
.reccard button { width: 95px; height: 34px; border-radius: 3px; background: #1a73e8; color: #fff; font-weight: 500; }
.tablebar { height: 54px; flex: none; display: flex; align-items: center; background: #fff; border-top: 1px solid #dadce0; border-bottom: 1px solid #dadce0; color: #5f6368; padding: 0 19px 0 4px; }
.fab { width: 38px; height: 38px; border-radius: 50%; background: #1a73e8; display: grid; place-items: center; box-shadow: 0 1px 4px rgba(60,64,67,.4); }
.filt { margin: 0 44px 0 19px; }
.addf { font-size: 14px; }
.acts { margin-left: auto; display: flex; gap: 23px; }
.acts button { display: flex; flex-direction: column; align-items: center; gap: 4px; line-height: 14px; }
.acts .wide { margin-left: 6px; }
.vsep { width: 1px; height: 30px; background: #9aa0a6; margin: 0 26px 0 18px; }
.tablewrap { flex: 1; min-height: 0; overflow: hidden; background: #fff; padding-right: 4px; }
table { width: 100%; table-layout: fixed; border-collapse: separate; border-spacing: 0; font-size: 11px; line-height: 14px; }
.c-chk { width: 45px; } .c-dot { width: 52px; } .c-name { width: 281px; } .c-bud { width: 155px; } .c-opt { width: 90px; } .c-type { width: 105px; } .c-n { width: 75px; } .c-cost { width: 82px; } .c-cpa { width: 105px; } .c-conv { width: 111px; }
td, th { padding: 0 8px; text-align: right; border-bottom: 1px solid #dadce0; border-right: 1px solid #e0e2e5; font-weight: 400; vertical-align: middle; white-space: nowrap; }
th { height: 71px; font-weight: 500; white-space: normal; }
th b { font-weight: 700; }
td { height: 38px; }
.draft td { height: 39px; } .camp td { height: 42px; } .pmax td { height: 43px; }
.l { text-align: left; white-space: normal; }
tr > :nth-child(1), tr > :nth-child(2) { border-right: 0; text-align: left; }
tr > :nth-child(1) { padding: 0 0 0 19px; }
tr > .nm { padding: 0; text-align: left; position: relative; border-right: 2px solid #d0d2d5; }
tr > .in { padding-left: 15px; }
th.nm svg { display: inline-block; vertical-align: -3px; margin-left: 2px; }
.bud { padding-right: 46px; }
.bud div, .cpa div { position: relative; }
.bud div .s16 { position: absolute; right: -20px; top: -1px; }
.bud div .be { position: absolute; right: -44px; top: -2px; color: #80868b; }
.cpa { padding-right: 23px; }
.cpa svg { position: absolute; right: -21px; top: -3px; color: #80868b; }
input[type=checkbox] { appearance: none; display: block; width: 14px; height: 14px; margin: 0; border: 1px solid #5f6368; border-radius: 2px; background: #fff; }
.dot { display: block; width: 11px; height: 11px; border-radius: 50%; background: #0b8043; }
.dot.grey { background: #5f6368; }
.cell { display: flex; align-items: center; }
.cell .s10 { margin-left: 4px; color: #9aa0a6; }
.cell a { width: 144px; white-space: normal; }
td a { color: #3367d6; }
.typ { margin: 0 10px 0 3px; color: #8a8a8a; }
.typ.s20 { margin: 0 9px 0 2px; }
.chev { margin-left: 2px; color: #5f6368; }
.ed { margin-left: 11px; color: #5f6368; } .gr { margin-left: 24px; color: #5f6368; }
.q { margin: 0 0 2px 10px; color: #5f6368; }
u { text-decoration: none; border-bottom: 1px dashed #3c4043; }
.pct { border-bottom: 1px dashed #3367d6; }
.st { overflow: hidden; padding-right: 0; }
.chip { display: flex; align-items: center; gap: 7px; width: 180px; height: 28px; padding-left: 10px; border-radius: 4px; background: #fef5d9; color: #c5600b; font-size: 14px; white-space: nowrap; margin-top: 3px; }
.chip svg { color: #c5522f; }
.chip.strong { width: 300px; background: #fbe3c3; }
.draft:first-child td { background: #e6f4ea; }
.hover td { background: #f6f8f8; }
.tot td { background: #f8f9fb; }
.marked { position: relative; }
.marked td:first-child::after { content: ""; position: absolute; inset: 0 -2px 3px 0; border: 3px solid #dd0a0f; z-index: 1; }
.cursor { position: absolute; left: 86px; top: 14px; width: 16px; height: 24px; }
.hscroll { height: 8px; flex: none; background: #fff; padding-left: 391px; }
.hscroll i { display: block; width: 62%; height: 8px; background: #bdc1c6; }
.vthumb { position: absolute; right: 0; top: 294px; width: 2px; height: 488px; background: #b0b4b9; }
.toast { position: absolute; right: 267px; top: 56px; width: 413px; height: 45px; background: #fff; border-radius: 4px; box-shadow: 0 3px 8px rgba(60,64,67,.5); display: flex; align-items: center; padding-left: 8px; font-size: 14px; color: #202124; white-space: nowrap; }
.toast span { margin: 0 5px 0 4px; }
.toast a { color: #1a73e8; text-decoration: underline; }
.toast button { margin: 0 13px 0 auto; color: #5f6368; }
.red { color: #d01f1f; }
.watermark { position: absolute; right: 60px; bottom: 45px; width: 439px; font-family: "Open Sans", sans-serif; font-size: 17px; line-height: 25px; color: rgba(120,120,120,.5); pointer-events: none; }
.watermark p { margin: 0; }
.watermark .w1 { font-size: 24px; line-height: 35px; }

/* taskbar */
.taskbar { height: 60px; flex: none; display: flex; align-items: center; color: #fff; font: 14px/20px "Open Sans", "Noto Sans", sans-serif; background: linear-gradient(90deg, #1e2a33 0, #232629 10%, #35200f 14%, #33210f 24%, #2a211b 45%, #252422 60%, #262826 75%, #2c211a 82%, #20252a 90%, #1f262b 100%); }
.weather { display: flex; align-items: center; gap: 13px; padding-left: 25px; width: 613px; }
.weather svg { width: 26px; height: 32px; }
.now { color: #ccc; }
.center { display: flex; align-items: center; }
.start svg { width: 29px; height: 29px; }
.tsearch { width: 275px; height: 40px; margin: 0 6px 0 17px; border: 1px solid #625a58; border-radius: 20px; background: #463d3a; display: flex; align-items: center; gap: 8px; padding-left: 12px; }
.tsearch input { border: 0; background: none; width: 200px; font-size: 16px; color: #ddd; }
.tsearch input::placeholder { color: #c8c4c2; opacity: 1; }
.pins { display: flex; gap: 6px; }
.pins button { position: relative; width: 49px; height: 49px; display: grid; place-items: center; border-radius: 5px; }
.pins svg { width: 31px; height: 31px; }
.pins .tile { background: #363230; }
.pins .tile::after { content: ""; position: absolute; left: 15px; right: 15px; bottom: 1px; height: 4px; border-radius: 2px; background: #f47f66; }
.pins .disc { background: #80424a; }
.pins .disc::after { left: 5px; right: 5px; background: #ff9aa2; }
.cava { position: absolute; left: 26px; top: 4px; width: 20px; height: 20px; border-radius: 50%; background: #7650b8; font: 12px/20px Roboto, sans-serif; text-align: center; }
.rec-dot { position: absolute; left: 26px; top: 4px; width: 18px; height: 18px; border: 5px solid #ea4a4a; border-radius: 50%; background: #fff; }
.tray { margin-left: auto; display: flex; align-items: center; padding-right: 24px; }
.tg { margin: 0 16px 0 18px; } .lang { margin: 0 23px; } .tv { margin: 0 8px; } .tb { margin-right: 19px; }
.clock { text-align: right; width: 73px; }
```
